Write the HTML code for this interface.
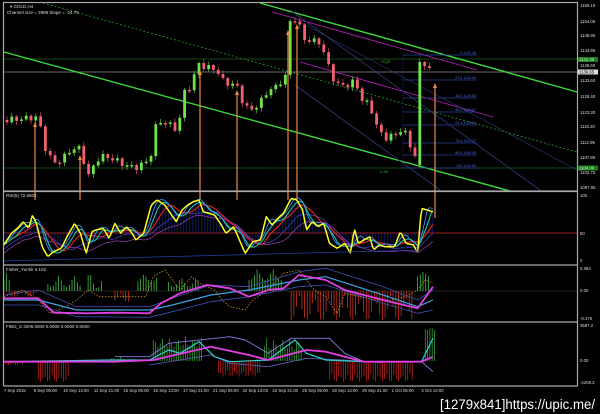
<!DOCTYPE html>
<html><head><meta charset="utf-8"><style>
html,body{margin:0;padding:0;background:#000;width:600px;height:414px;overflow:hidden}
svg{display:block}
text{font-family:"Liberation Sans",sans-serif}
</style></head><body>
<svg id="s" width="600" height="414" viewBox="0 0 600 414" xmlns="http://www.w3.org/2000/svg">
<rect width="600" height="414" fill="#000"/>
<g id="g"></g>
<g stroke="#a8a8a8" stroke-width="1.2" fill="none">
<rect x="3.5" y="2.5" width="574" height="188.5"/>
<line x1="3.5" y1="191.5" x2="577.5" y2="191.5"/>
<line x1="3.5" y1="265" x2="577.5" y2="265"/>
<line x1="3.5" y1="322" x2="577.5" y2="322"/>
<line x1="3.5" y1="386" x2="577.5" y2="386"/>
<line x1="3.5" y1="191" x2="3.5" y2="386"/>
<line x1="577.5" y1="191" x2="577.5" y2="386"/>
</g>
<text x="10" y="8" fill="#ddd" font-size="4.5">▾ GOLD,H4</text>
<text x="7" y="14" fill="#ddd" font-size="4.5">Channel size = 2989 Slope = -24.75</text>
<text x="6" y="197" fill="#ddd" font-size="4.5">RSI(5) 72.5602</text>
<text x="6" y="271" fill="#ddd" font-size="4.5">Fisher_Yur4ik 0.102</text>
<text x="6" y="328" fill="#ddd" font-size="4.5">FIBO_S 3206.0000 0.0000 0.0000 0.0000</text>
<text x="381" y="63" fill="#2a8a2a" font-size="4.5">High</text>
<text x="380" y="173" fill="#2a8a2a" font-size="4.5">Low</text>
<g fill="#ddd" font-size="4.3">
<text x="580" y="7">1159.15</text><text x="580" y="23">1154.05</text><text x="580" y="37">1148.95</text>
<text x="580" y="52">1143.85</text><text x="580" y="67">1138.60</text><text x="580" y="82">1133.60</text>
<text x="580" y="98">1128.40</text><text x="580" y="114">1123.30</text><text x="580" y="128">1118.20</text>
<text x="580" y="144">1112.95</text><text x="580" y="159">1107.85</text><text x="580" y="174">1102.75</text>
<text x="580" y="189">1097.65</text>
<text x="580" y="197">100</text><text x="580" y="235">50</text><text x="580" y="262">0</text>
<text x="580" y="270">0.384</text><text x="580" y="292">0.00</text><text x="580" y="320">-0.476</text>
<text x="580" y="327">3587.2</text><text x="580" y="362">0.00</text><text x="580" y="384">-2269.2</text>
</g>
<rect x="578" y="57" width="20" height="5" fill="#1d7a1d"/><text x="579" y="61" fill="#cfc" font-size="4.3">1141.30</text>
<rect x="578" y="69.5" width="20" height="5" fill="#ddd"/><text x="579" y="73.5" fill="#000" font-size="4.3">1136.65</text>
<rect x="578" y="165.5" width="20" height="5" fill="#1d7a1d"/><text x="579" y="169.5" fill="#cfc" font-size="4.3">1104.00</text>
<g id="dates" fill="#ddd" font-size="4.3"></g>
<text x="440" y="409" fill="#fff" font-size="13.5" font-family="Liberation Mono" textLength="155" lengthAdjust="spacingAndGlyphs">[1279x841]https://upic.me/</text>
</svg>
<script>
(function(){
var NS="http://www.w3.org/2000/svg",G=document.getElementById('g');
function el(t,a){var e=document.createElementNS(NS,t);for(var k in a)e.setAttribute(k,a[k]);G.appendChild(e);return e}
function line(x1,y1,x2,y2,c,w,d){var a={x1:x1,y1:y1,x2:x2,y2:y2,stroke:c,'stroke-width':w||1};if(d)a['stroke-dasharray']=d;return el('line',a)}
function poly(pts,c,w,d){var a={points:pts.map(function(p){return p[0].toFixed(1)+','+p[1].toFixed(1)}).join(' '),fill:'none',stroke:c,'stroke-width':w||1,'stroke-linejoin':'round'};if(d)a['stroke-dasharray']=d;return el('polyline',a)}
function Z(a){var r=[];for(var i=0;i<a.length;i+=2)r.push([a[i]/2.61,190+a[i+1]/3]);return r}
function interp(pts,x){if(x<=pts[0][0])return pts[0][1];for(var i=1;i<pts.length;i++){if(x<=pts[i][0]){var t=(x-pts[i-1][0])/(pts[i][0]-pts[i-1][0]);return pts[i-1][1]+t*(pts[i][1]-pts[i-1][1])}}return pts[pts.length-1][1]}
function smooth(pts,n,dy){var out=[];for(var i=0;i<pts.length;i++){var s=0,c=0;for(var j=Math.max(0,i-n);j<=i;j++){s+=pts[j][1];c++}out.push([pts[i][0],s/c+(dy||0)])}return out}
function dense(pts,step){var o=[];for(var x=pts[0][0];x<=pts[pts.length-1][0];x+=step)o.push([x,interp(pts,x)]);return o}
line(4,72,577,72,'#8a8a8a',0.8);
line(4,59,577,59,'#1e5a1e',0.8);
line(4,168,577,168,'#1e5a1e',0.8);
line(260,3,577,92,'#3fd83f',1.4);
line(4,52,510,191,'#3fd83f',1.4);
line(43,3,577,152,'#2a9a2a',0.8,'2,2');
line(272,12,477,70,'#b020b0',0.9);
line(300,62,493,117,'#b020b0',0.9);
line(290,10,540,190,'#303a78',0.8);
line(295,85,440,190,'#303a78',0.8);
line(300,22,577,170,'#303a78',0.6);
var fl=[[55,'0 1141.46'],[80,'23.6 1133.54'],[98,'38.2 1128.63'],[112,'50.0 1124.67'],[125,'61.8 1119.61'],[143,'76.4 1112.77'],[155,'88.6 1109.08'],[168,'100 1104.63']];
fl.forEach(function(f){line(403,f[0],477,f[0],'#2c3f9a',0.7);var t=el('text',{x:476,y:f[0]-1,fill:'#4a6ad0','font-size':3.6,'text-anchor':'end'});t.textContent=f[1]});
line(403,55,403,168,'#2c3f9a',0.6,'1,1');
var cp=[[7,120],[30,118],[35,116],[40,125],[47,155],[55,162],[62,160],[70,150],[80,148],[85,165],[90,180],[95,160],[105,156],[115,160],[125,165],[135,168],[150,160],[155,128],[162,120],[170,125],[178,130],[184,92],[192,85],[198,62],[205,68],[215,68],[222,80],[230,84],[238,87],[242,100],[248,110],[255,108],[262,100],[268,90],[275,88],[282,80],[287,75],[290,22],[296,18],[305,40],[320,42],[330,70],[336,85],[350,85],[355,80],[362,100],[370,105],[378,130],[385,138],[395,135],[403,128],[410,145],[418,162],[420,165],[423,60],[428,70],[433,68],[436,70]];
var prev=120,n=0;
for(var x=7;x<=434;x+=4.8){n++;var c=interp(cp,x)+Math.sin(n*2.3)*3;var o=prev;if(x>419&&x<424){o=165;c=62}
var up=c<o,col=up?'#6fe34a':'#f06070';var tp=Math.min(o,c),bt=Math.max(o,c);if(bt-tp<1.5){bt=tp+1.5}
line(x,tp-1-Math.abs(Math.sin(n))*3,x,bt+1+Math.abs(Math.cos(n))*3,col,0.6);
el('rect',{x:x-1.4,y:tp,width:2.8,height:bt-tp,fill:col});prev=c}
[[35,122],[80,155],[200,70],[237,90],[288,30],[297,24]].forEach(function(a){line(a[0],a[1]+3,a[0],200,'#f08a40',1.2);el('polygon',{points:(a[0]-2)+','+(a[1]+5)+' '+(a[0]+2)+','+(a[1]+5)+' '+a[0]+','+a[1],fill:'#f08a40'})});
line(435,86,435,218,'#f08a40',1.2);el('polygon',{points:'433,88 437,88 435,83',fill:'#f08a40'});
line(4,233,577,233,'#a02020',1);
var Y=Z([10,165,30,130,50,110,60,95,75,115,85,75,95,100,110,170,125,200,140,185,160,175,175,140,195,100,210,130,225,190,240,125,250,120,270,115,285,145,300,100,315,130,330,110,345,130,355,150,375,130,395,45,410,30,430,45,445,70,460,95,475,60,490,45,505,35,520,30,530,65,545,70,560,75,575,100,590,130,610,110,625,150,640,190,660,155,680,150,695,80,710,105,725,85,740,70,760,25,775,30,790,60,800,120,815,95,830,110,845,100,860,160,880,175,900,160,915,190,925,115,935,160,950,150,965,140,975,180,990,165,1005,170,1030,170,1045,125,1060,160,1080,165,1090,190,1100,55,1115,60,1130,65]);
var D=dense(Y,1.5);var S6=smooth(D,6);
D.forEach(function(p,k){if(k%2==0){line(p[0],233,p[0],S6[k][1],'#1a2a8a',0.6)}});
poly(smooth(D,30,8),'#8a3aa8',0.8);
poly(smooth(D,22,4),'#4040c0',0.8);
poly(smooth(D,14),'#e02020',1.2);
poly(smooth(D,8),'#20c0a0',1.1);
poly(smooth(D,5,-2),'#40a0ff',0.8);
poly(D,'#ffff20',1.5);
line(4,261,420,250,'#2040a0',0.8);
line(4,291,577,291,'#444',0.5);
function bars(ranges,col,base,step){ranges.forEach(function(r){for(var zx=r[0];zx<=r[1];zx+=step){var h=r[2]+(r[3]-r[2])*Math.abs(Math.sin(zx*0.37));line(zx/2.61,base,zx/2.61,190+h/3,col,0.8)}})}
bars([[10,30,250,290],[125,210,255,290],[230,270,240,295],[360,410,250,275],[440,520,260,290],[650,740,235,270],[1090,1120,245,260]],'#40c040',291,7);
bars([[10,100,305,320],[300,340,310,335],[760,1080,315,390]],'#d03018',291,7);
poly(Z([10,320,60,300,100,330,130,370,170,350,200,330,230,300,260,320,300,320,340,320,380,320,400,260,430,240,450,270,470,300,500,260,520,280,560,300,580,330,600,350,640,360,660,330,700,300,740,250,780,240,820,300,850,320,880,370,900,310,940,320,980,330,1020,330,1060,320,1090,300,1110,270,1130,280]),'#c09020',0.8,'1.5,1.5');
poly(Z([10,315,100,300,200,350,390,350,450,325,550,285,650,290,780,245,850,235,1000,290,1090,330,1130,300]),'#4050b0',0.8);
poly(Z([10,345,100,345,200,380,390,382,450,365,550,335,650,320,780,290,850,285,1000,340,1090,370,1130,360]),'#4050b0',0.8);
poly(Z([10,330,100,330,200,360,390,360,450,345,550,315,650,300,780,270,850,260,1000,315,1090,350,1130,330]),'#40a0e0',1.2);
poly(Z([10,325,100,325,140,368,230,370,300,368,390,370,420,340,470,310,540,285,600,295,650,320,700,300,740,295,780,255,850,270,900,300,1000,330,1090,355,1130,290]),'#e040e0',1.8);
bars([[400,530,440,470],[690,790,440,480],[1110,1135,410,420],[290,330,500,510]],'#30a030',361,6);
bars([[100,180,555,575],[570,680,540,560],[860,1080,550,575],[10,60,520,525]],'#c02018',361,6);
poly(Z([300,500,390,500,440,460,600,440,640,450,700,490,760,445,860,445,900,490,950,515,1100,515,1130,545]),'#8080e0',0.9);
poly(Z([390,525,550,495,600,520,700,530,800,505,900,510,1000,518]),'#6060c0',0.8);
poly(Z([10,515,290,510,390,510,440,480,470,490,520,455,560,500,600,515,700,510,770,450,800,490,850,510,950,515,1100,515,1130,445]),'#30d0d0',1.2);
poly(Z([10,515,300,515,400,510,550,470,650,495,700,510,800,480,850,485,950,515,1100,515,1130,500]),'#e040e0',1.8);
var dl=[[10,'7 Sep 2015'],[88,'9 Sep 05:00'],[165,'10 Sep 13:00'],[245,'11 Sep 21:00'],[322,'15 Sep 05:00'],[400,'16 Sep 13:00'],[478,'17 Sep 21:00'],[556,'21 Sep 05:00'],[633,'22 Sep 13:00'],[711,'23 Sep 21:00'],[789,'25 Sep 05:00'],[867,'28 Sep 13:00'],[945,'29 Sep 21:00'],[1022,'1 Oct 05:00'],[1100,'2 Oct 13:00']];
var DG=document.getElementById('dates');
dl.forEach(function(d){var t=document.createElementNS(NS,'text');t.setAttribute('x',d[0]/2.61);t.setAttribute('y',392);t.textContent=d[1];DG.appendChild(t)});
})();
</script>
</body></html>
